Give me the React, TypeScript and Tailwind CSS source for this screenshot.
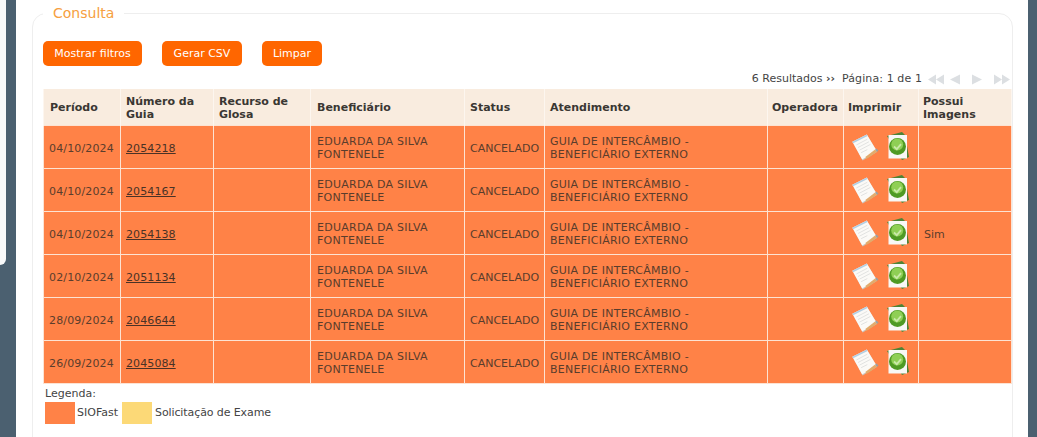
import React from 'react';

const rows = [
  { periodo: '04/10/2024', guia: '2054218', imagens: '' },
  { periodo: '04/10/2024', guia: '2054167', imagens: '' },
  { periodo: '04/10/2024', guia: '2054138', imagens: 'Sim' },
  { periodo: '02/10/2024', guia: '2051134', imagens: '' },
  { periodo: '28/09/2024', guia: '2046644', imagens: '' },
  { periodo: '26/09/2024', guia: '2045084', imagens: '' },
];

const headers = [
  { label: 'Período', cls: 'w-[77px] pl-[6px]' },
  { label: 'Número da Guia', cls: 'w-[93px] pl-[5px]' },
  { label: 'Recurso de Glosa', cls: 'w-[97px] pl-[5px]' },
  { label: 'Beneficiário', cls: 'w-[154px] pl-[6px]' },
  { label: 'Status', cls: 'w-[80px] pl-[5px]' },
  { label: 'Atendimento', cls: 'w-[223px] pl-[5px]' },
  { label: 'Operadora', cls: 'w-[76px] pl-[4px]' },
  { label: 'Imprimir', cls: 'w-[75px] pl-[4px]' },
  { label: 'Possui Imagens', cls: 'w-[93px] pl-[4px]' },
];

const NoteIcon = () => (
  <svg width="28" height="28" viewBox="0 0 26.500 27" className="shrink-0">
    <path d="M2 9.500L15.500 2.500 25 18 11 26.500z" fill="#c9c5c0" />
    <path d="M1 8.500L15 1.500 24.500 17 10.500 25.500z" fill="#fbfaf7" />
    <path d="M1 8.500L15 1.500 15.800 2.800 1.800 9.800z" fill="#b4d0e4" />
    <path d="M5 11.500l10.500-5.500M6.500 14l10.500-5.500M8 16.500l10.500-5.500M9.500 19l6-3" stroke="#dcdddc" strokeWidth="0.8" />
    <path d="M14.500 22.500l8.500-6.500 1.800 2-8.500 6.200-2.800.8z" fill="#e2ab6c" />
    <path d="M23 16l1.500-1 1.800 2-1.500 1z" fill="#98a0a4" />
  </svg>
);

const CheckDocIcon = () => (
  <svg width="24" height="29" viewBox="0 0 24 29" className="shrink-0">
    <path d="M1 4L16 0l3 3 4 22-7 3z" fill="#4d8436" />
    <rect x="2.500" y="3" width="18.500" height="23.500" fill="#f8f8f6" />
    <circle cx="11.500" cy="14.500" r="8.500" fill="#4f9a24" />
    <circle cx="11.200" cy="12.500" r="6" fill="#8fcf55" />
    <path d="M8 14.500l2.800 2.700 4.200-5" fill="none" stroke="#c9e9a8" strokeWidth="1.800" />
  </svg>
);

const PagerArrow = ({ dir, double }: { dir: 'left' | 'right'; double?: boolean }) => (
  <svg width={double ? 16 : 10} height="11" viewBox={double ? '0 0 16 11' : '0 0 10 11'} fill="#dcdfe2">
    {dir === 'left' ? (
      double ? (
        <path d="M0 5.500L8 .5v10zM8 5.500L16 .5v10z" />
      ) : (
        <path d="M0 5.500L10 .5v10z" />
      )
    ) : double ? (
      <path d="M0 .5l8 5-8 5zM8 .5l8 5-8 5z" />
    ) : (
      <path d="M0 .5l10 5-10 5z" />
    )}
  </svg>
);

const ActionButton = ({ children, className }: { children: React.ReactNode; className: string }) => (
  <button className={`h-[25px] rounded-[5px] bg-[#ff6600] text-[11px] leading-none text-[#fff] ${className}`}>
    {children}
  </button>
);

export default function App() {
  return (
    <div className="flex h-[437px] w-[1037px] overflow-hidden bg-[#4b6070] font-['DejaVu_Sans',Verdana,sans-serif] text-[11px] text-[#5a3d2c]">
      <div className="h-[265px] w-[6px] shrink-0 rounded-br-[6px] bg-[#f8f9fa]" />

      <main className="ml-[10px] h-full w-[1012px] shrink-0 bg-white px-[16px]">
        <fieldset className="mt-[5px] h-[460px] w-[980px] rounded-t-[14px] border border-[#eeeeee] pl-[10px] pr-0">
          <legend className="px-[10px] text-[14px] leading-[17px] text-[#f6a040]">Consulta</legend>

          <div className="mt-[19px] flex gap-[20px]">
            <ActionButton className="w-[99px]">Mostrar filtros</ActionButton>
            <ActionButton className="w-[80px]">Gerar CSV</ActionButton>
            <ActionButton className="w-[60px]">Limpar</ActionButton>
          </div>

          <div className="mb-[1px] mt-[4px] flex h-[18px] w-[968px] items-center justify-end pr-[1px] text-[#444]">
            <span>6 Resultados <b className="font-bold">››</b></span>
            <span className="ml-[7px] tracking-[0.1px]">Página: 1 de 1</span>
            <div className="ml-[6px] flex items-center">
              <PagerArrow dir="left" double />
              <span className="w-[6px]" />
              <PagerArrow dir="left" />
              <span className="w-[12px]" />
              <PagerArrow dir="right" />
              <span className="w-[12px]" />
              <PagerArrow dir="right" double />
            </div>
          </div>

          <table className="w-[968px] table-fixed border-collapse">
            <thead>
              <tr className="h-[36px] bg-[#f9ecdf] text-left">
                {headers.map((h) => (
                  <th
                    key={h.label}
                    className={`${h.cls} border-x border-[#fdf6ef] pr-[4px] pt-[2px] text-[11px] font-bold leading-[13px] text-[#3a3733]`}
                  >
                    {h.label}
                  </th>
                ))}
              </tr>
            </thead>
            <tbody>
              {rows.map((row) => (
                <tr key={row.guia} className="h-[43px] bg-[#ff8247] leading-[13px]">
                  <td className="border border-[#fde3d3] pl-[5px] pt-[4px] tracking-[0.15px]">{row.periodo}</td>
                  <td className="border border-[#fde3d3] pl-[5px] pt-[4px]">
                    <a href="#" className="text-[#4a3226] underline tracking-[0.1px]">{row.guia}</a>
                  </td>
                  <td className="border border-[#fde3d3]" />
                  <td className="border border-[#fde3d3] px-[6px] pt-[2px] tracking-[0.25px]">EDUARDA DA SILVA FONTENELE</td>
                  <td className="border border-[#fde3d3] pl-[5px] pt-[4px]">CANCELADO</td>
                  <td className="border border-[#fde3d3] pl-[5px] pt-[2px] tracking-[0.25px]">
                    GUIA DE INTERCÂMBIO -<br />BENEFICIÁRIO EXTERNO
                  </td>
                  <td className="border border-[#fde3d3]" />
                  <td className="border border-[#fde3d3] pl-[7px]">
                    <div className="flex items-center gap-[7px]">
                      <NoteIcon />
                      <CheckDocIcon />
                    </div>
                  </td>
                  <td className="border border-[#fde3d3] px-[5px] pt-[4px]">{row.imagens}</td>
                </tr>
              ))}
            </tbody>
          </table>

          <div className="ml-[2px] mt-[3px] leading-[13px] text-[#444]">
            <div>Legenda:</div>
            <div className="mt-[2px] flex items-center">
              <span className="h-[22px] w-[30px] bg-[#ff8247]" />
              <span className="ml-[2px] mr-[4px]">SIOFast</span>
              <span className="h-[22px] w-[30px] bg-[#fcd977]" />
              <span className="ml-[3px] tracking-[-0.1px]">Solicitação de Exame</span>
            </div>
          </div>
        </fieldset>
      </main>
    </div>
  );
}
